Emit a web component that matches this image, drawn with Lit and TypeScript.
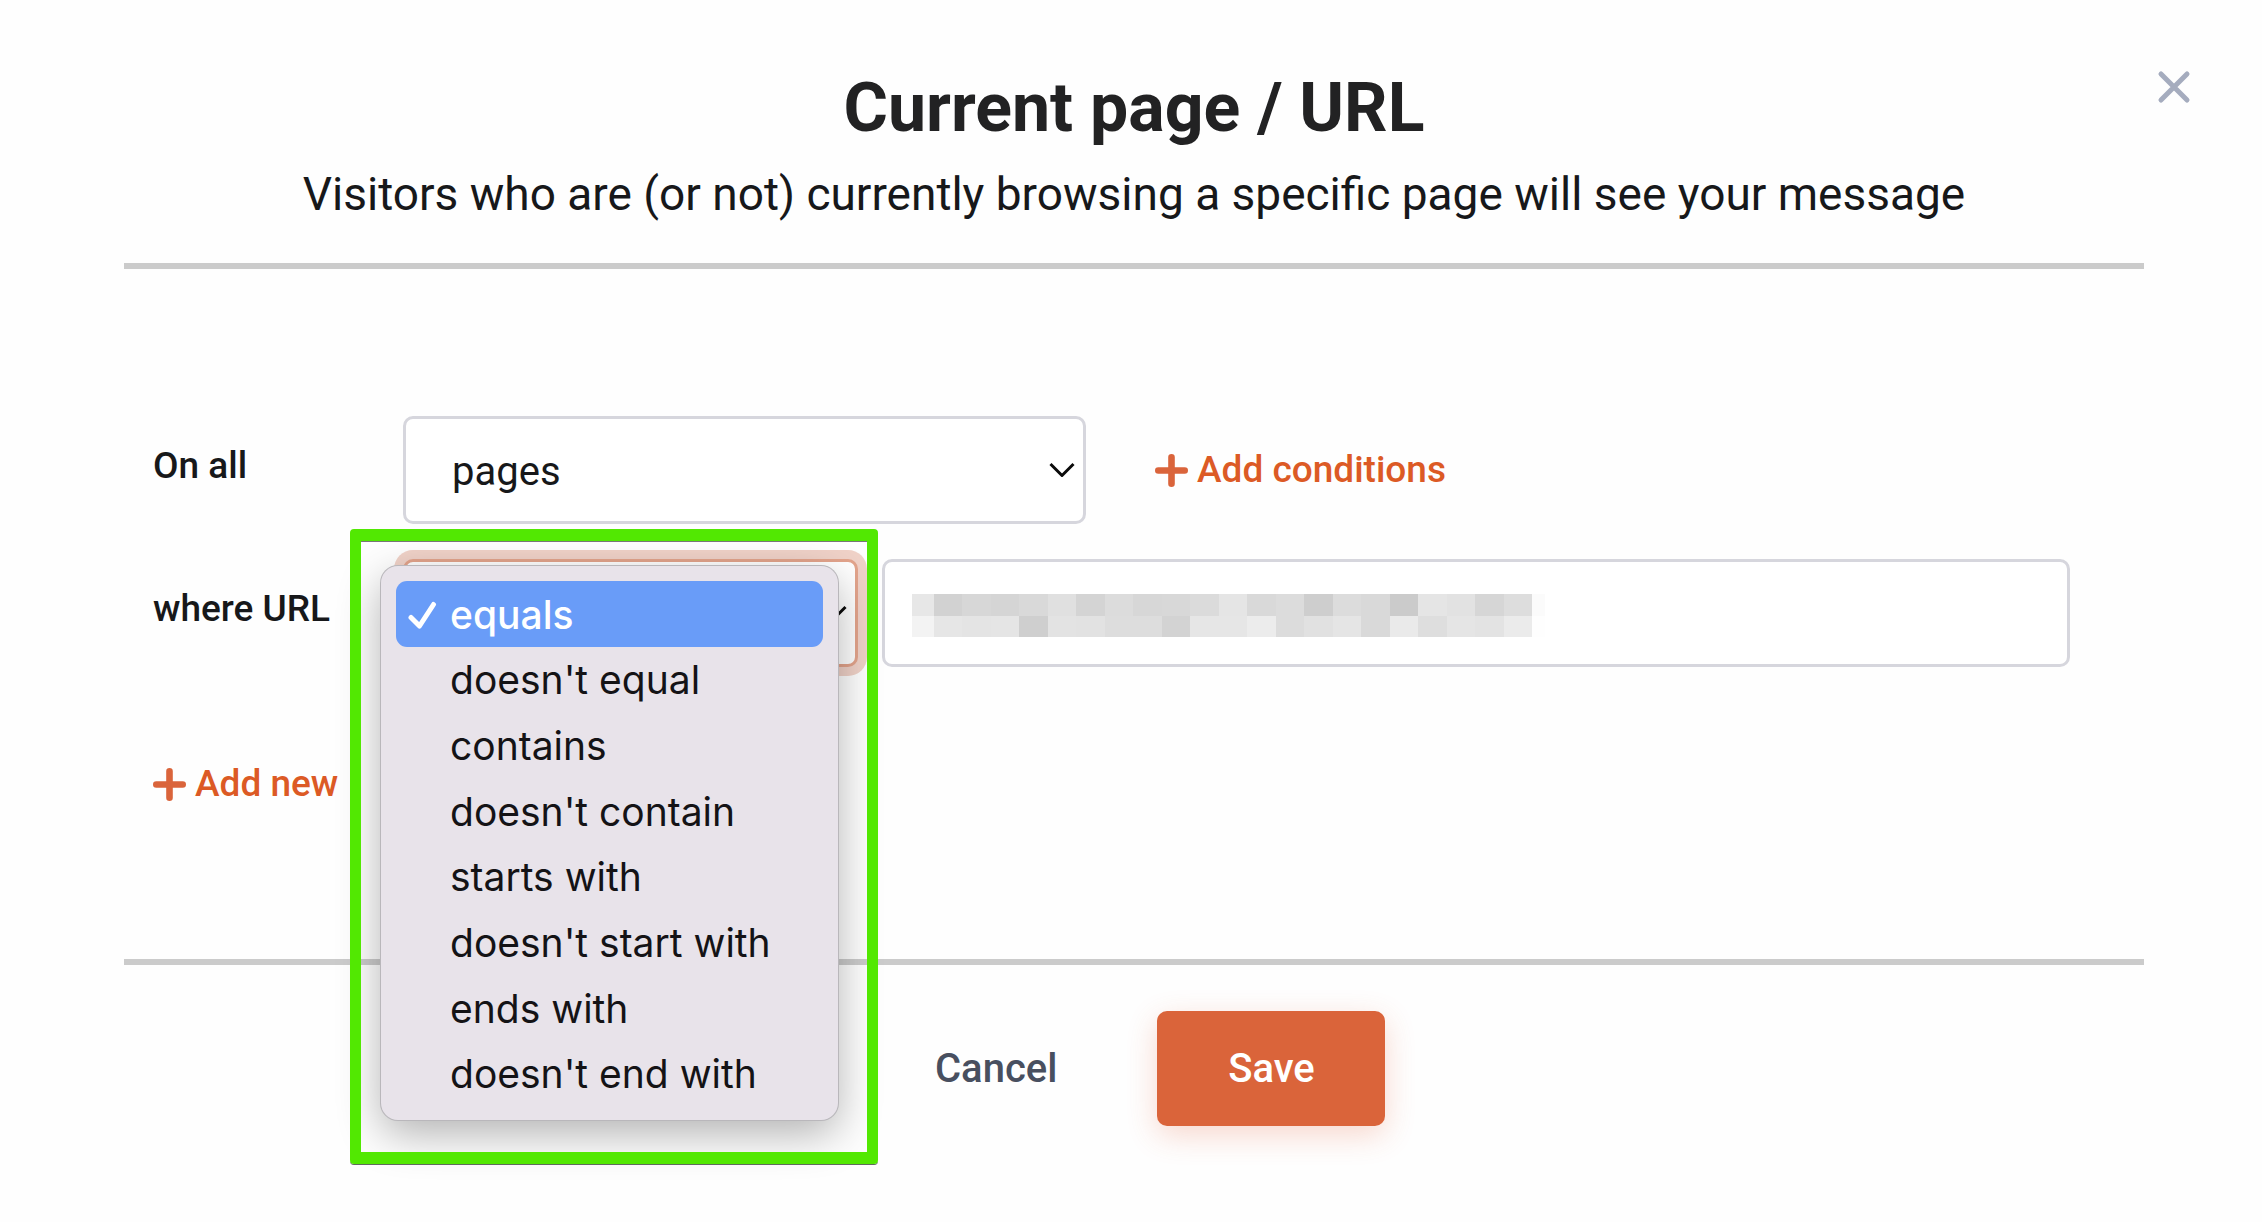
import { LitElement, html, css, svg } from "lit";
import { customElement, state } from "lit/decorators.js";
import { classMap } from "lit/directives/class-map.js";

const OPERATORS = [
  "equals",
  "doesn't equal",
  "contains",
  "doesn't contain",
  "starts with",
  "doesn't start with",
  "ends with",
  "doesn't end with",
];

// Grey levels of the masked address, one list per row of blocks.
const MASK_ROWS = [
  [231, 210, 215, 213, 217, 224, 212, 220, 215, 216, 219, 229, 217, 220, 206, 220, 217, 203, 229, 226, 214, 221, 251],
  [243, 230, 228, 229, 207, 227, 226, 221, 221, 211, 230, 230, 236, 220, 225, 229, 217, 234, 222, 229, 227, 235, 254],
];

const plusIcon = html`<svg class="plus" viewBox="0 0 33 33" aria-hidden="true">
  <path d="M16.500 3.300V29.700M3.300 16.500H29.700" />
</svg>`;

const chevronIcon = html`<svg class="chevron" viewBox="0 0 26 16" aria-hidden="true">
  <path d="M1.500 2L13 13.500L24.500 2" />
</svg>`;

@customElement("app-root")
export class AppRoot extends LitElement {
  @state() private operator = OPERATORS[0];

  static styles = css`
    :host {
      display: block;
      min-height: 100vh;
      background: #fefefe;
      color: #17181a;
      font-family: Roboto, "Liberation Sans", sans-serif;
    }
    * {
      box-sizing: border-box;
    }
    button,
    select,
    input {
      font: inherit;
      color: inherit;
      margin: 0;
    }
    button {
      border: 0;
      padding: 0;
      background: none;
      cursor: pointer;
    }
    .dialog {
      display: grid;
      grid-template-columns: 124px minmax(0, 1fr) 118px;
    }
    .header {
      grid-column: 2;
      padding: 68px 0 39px;
      border-bottom: 6px solid #cbcbcb;
      text-align: center;
    }
    h1 {
      margin: 0 0 16px;
      font-size: 68px;
      line-height: 80px;
      font-weight: 700;
      color: #222223;
    }
    .subtitle {
      margin: 0;
      font-size: 46px;
      line-height: 60px;
    }
    .close {
      grid-column: 3;
      align-self: start;
      justify-self: start;
      margin: 70px 0 0 13px;
      width: 34px;
      height: 34px;
    }
    .close svg {
      display: block;
      width: 100%;
      height: 100%;
      fill: none;
      stroke: #a5acbe;
      stroke-width: 5;
      stroke-linecap: round;
    }
    .form {
      grid-column: 2;
      display: flex;
      flex-direction: column;
      gap: 35px;
      padding: 147px 74px 153px 29px;
      border-bottom: 6px solid #cbcbcb;
    }
    .row {
      display: flex;
      align-items: center;
    }
    .label {
      flex: 0 0 250px;
      padding-bottom: 8px;
      font-size: 37px;
      line-height: 44px;
      font-weight: 500;
    }
    .field {
      position: relative;
      display: flex;
      flex: 0 1 683px;
      height: 108px;
      font-size: 40px;
    }
    .field.operator {
      flex-basis: 455px;
    }
    .field.value {
      flex: 1 1 0;
      margin-left: 24px;
    }
    .control {
      width: 100%;
      height: 100%;
      border: 3px solid #d6d6dd;
      border-radius: 10px;
      background: #fff;
      outline: none;
      appearance: none;
    }
    select.control {
      padding: 2px 48px 0 46px;
    }
    input.control {
      padding: 0 28px;
    }
    .operator .control {
      border-color: #e3a48c;
      box-shadow: 0 0 0 9px #f0d2c8;
    }
    .chevron {
      position: absolute;
      right: 11px;
      top: 46px;
      width: 26px;
      height: 16px;
      fill: none;
      stroke: #0b0b0b;
      stroke-width: 3;
      stroke-linejoin: round;
      pointer-events: none;
    }
    .mask {
      position: absolute;
      left: 30px;
      top: 35px;
      width: 633px;
      height: 43px;
      pointer-events: none;
    }
    .action {
      display: flex;
      align-items: center;
      gap: 9px;
      color: #dc5a25;
      font-size: 37px;
      line-height: 44px;
      font-weight: 500;
    }
    .row .action {
      margin-left: 69px;
    }
    .form > .action {
      align-self: flex-start;
      margin-top: 60px;
    }
    .plus {
      width: 33px;
      height: 33px;
      fill: none;
      stroke: #da643b;
      stroke-width: 6.600;
      stroke-linecap: round;
    }
    .menu {
      position: absolute;
      z-index: 2;
      left: -22px;
      top: 7px;
      width: 457px;
      height: 554px;
      margin: 0;
      padding: 15px 15px 14px;
      display: grid;
      grid-auto-rows: 1fr;
      list-style: none;
      border-radius: 17px;
      background: #e8e3ea;
      box-shadow:
        0 0 0 1px #b9b7bb,
        0 14px 44px rgba(0, 0, 0, 0.3);
      font-family: Inter, "Liberation Sans", sans-serif;
      font-size: 39px;
      line-height: 48px;
      color: #141316;
    }
    .option {
      display: grid;
      grid-template-columns: 54px 1fr;
      align-items: center;
      padding-top: 2px;
      border-radius: 11px;
      white-space: nowrap;
      cursor: default;
    }
    .option.selected {
      background: #699cf8;
      color: #fff;
      font-weight: 500;
    }
    .option span {
      grid-column: 2;
    }
    .option svg {
      width: 30px;
      height: 30px;
      margin-left: 12px;
      fill: none;
      stroke: #fff;
      stroke-width: 5;
      stroke-linecap: round;
      stroke-linejoin: round;
    }
    .highlight {
      position: absolute;
      z-index: 3;
      left: -53px;
      top: -30px;
      width: 528px;
      height: 635px;
      border: solid #52e802;
      border-width: 12px 11px;
      border-radius: 4px;
      box-shadow:
        0 1px 0 #5f6b5c,
        inset 0 1px 0 #777;
      pointer-events: none;
    }
    .footer {
      grid-column: 2;
      display: flex;
      align-items: center;
      gap: 100px;
      padding: 46px 0 97px 811px;
      font-size: 40px;
      line-height: 48px;
      font-weight: 500;
    }
    .cancel {
      color: #484f5f;
    }
    .save {
      width: 228px;
      height: 115px;
      border-radius: 10px;
      background: #da643a;
      color: #fff;
      box-shadow: 0 9px 30px rgba(225, 90, 50, 0.24);
    }
  `;

  private renderMask() {
    return html`<svg class="mask" viewBox="0 0 633 43" aria-hidden="true" shape-rendering="crispEdges">
      ${MASK_ROWS.map((row, y) =>
        row.map((level, i) => {
          const x = i === 0 ? 0 : 21.500 + (i - 1) * 28.500;
          const w = i === 0 ? 21.500 : i === row.length - 1 ? 13 : 28.500;
          return svg`<rect x=${x} y=${y * 21.500} width=${w} height="21.5" fill=${`rgb(${level},${level},${level})`} />`;
        }),
      )}
    </svg>`;
  }

  private renderOption(name: string) {
    const selected = name === this.operator;
    return html`<li
      class=${classMap({ option: true, selected })}
      role="option"
      aria-selected=${selected ? "true" : "false"}
      @click=${() => (this.operator = name)}
    >
      ${selected
        ? html`<svg viewBox="0 0 30 30" aria-hidden="true"><path d="M3 17.500L11.500 26L25.500 4.500" /></svg>`
        : null}
      <span>${name}</span>
    </li>`;
  }

  render() {
    return html`<main class="dialog" role="dialog" aria-labelledby="title">
      <header class="header">
        <h1 id="title">Current page / URL</h1>
        <p class="subtitle">Visitors who are (or not) currently browsing a specific page will see your message</p>
      </header>
      <button class="close" type="button" aria-label="Close">
        <svg viewBox="0 0 34 34" aria-hidden="true"><path d="M4 4L30 30M30 4L4 30" /></svg>
      </button>

      <section class="form">
        <div class="row">
          <label class="label" for="scope">On all</label>
          <div class="field">
            <select class="control" id="scope">
              <option>pages</option>
            </select>
            ${chevronIcon}
          </div>
          <button class="action" type="button">${plusIcon}Add conditions</button>
        </div>

        <div class="row">
          <label class="label" for="operator">where URL</label>
          <div class="field operator">
            <select class="control" id="operator" .value=${this.operator}>
              ${OPERATORS.map((name) => html`<option ?selected=${name === this.operator}>${name}</option>`)}
            </select>
            ${chevronIcon}
            <ul class="menu" role="listbox" aria-label="Operator">
              ${OPERATORS.map((name) => this.renderOption(name))}
            </ul>
            <div class="highlight"></div>
          </div>
          <div class="field value">
            <input class="control" type="text" aria-label="URL" />
            ${this.renderMask()}
          </div>
        </div>

        <button class="action" type="button">${plusIcon}Add new</button>
      </section>

      <footer class="footer">
        <button class="cancel" type="button">Cancel</button>
        <button class="save" type="button">Save</button>
      </footer>
    </main>`;
  }
}
